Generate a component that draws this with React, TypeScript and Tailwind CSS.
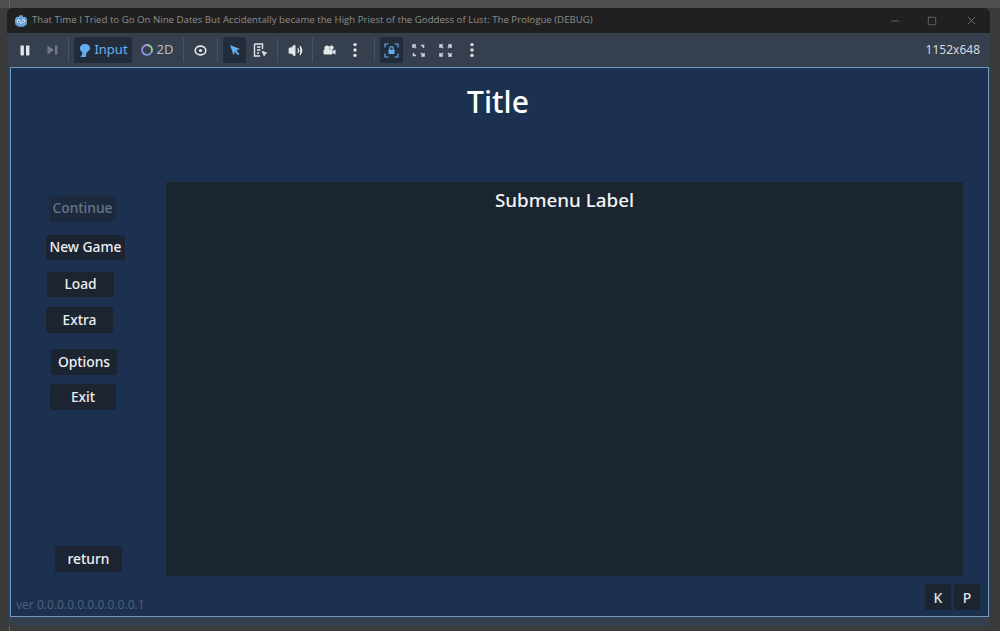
import { Volume2, Minus, Square, X } from "lucide-react";
import type { ReactNode } from "react";

function Sep() {
  return <div className="mx-[5px] h-[24px] w-px shrink-0 bg-[#4a5361]" />;
}

function ToolBtn({ children, active, w = 24 }: { children: ReactNode; active?: boolean; w?: number }) {
  return (
    <div
      className={`flex h-[26px] shrink-0 items-center justify-center rounded-[2px] ${active ? "bg-[#232c3a]" : ""}`}
      style={{ width: w }}
    >
      {children}
    </div>
  );
}

function GodotLogo() {
  return (
    <svg width="14" height="14" viewBox="0 0 16 16" className="shrink-0">
      <path
        d="M1 6 L3 3 L5.5 3.5 L6 1.5 H10 L10.5 3.5 L13 3 L15 6 L14.5 12 L11 14.5 H5 L1.5 12 Z"
        fill="#6ba4d8"
      />
      <circle cx="5.3" cy="8" r="1.8" fill="#fff" />
      <circle cx="10.7" cy="8" r="1.8" fill="#fff" />
      <circle cx="5.5" cy="8.2" r="0.9" fill="#33445a" />
      <circle cx="10.5" cy="8.2" r="0.9" fill="#33445a" />
      <rect x="7.4" y="9" width="1.2" height="2" fill="#fff" />
    </svg>
  );
}

function Dots() {
  return (
    <svg width="6" height="16" viewBox="0 0 6 16" fill="#dfe2e6">
      <circle cx="3" cy="2.6" r="1.7" />
      <circle cx="3" cy="8" r="1.7" />
      <circle cx="3" cy="13.4" r="1.7" />
    </svg>
  );
}

// corners and small arrows of the two "embed" buttons
function ExpandIcon() {
  return (
    <svg width="13" height="13" viewBox="0 0 13 13" fill="none" stroke="#cfd3d9" strokeWidth="1.5">
      <path d="M1 4V1h3M2 2l2 2" />
      <path d="M9 1.5h2.5V4" />
      <path d="M1.5 9v2.5H4" />
      <path d="M12 9v3H9M11 11L9 9" />
    </svg>
  );
}

function ShrinkIcon() {
  return (
    <svg width="13" height="13" viewBox="0 0 13 13" fill="none" stroke="#cfd3d9" strokeWidth="1.5">
      <path d="M1 4V1h3M1.5 1.5L4 4" />
      <path d="M9 1h3v3M11.5 1.5L9 4" />
      <path d="M1 9v3h3M1.5 11.5L4 9" />
      <path d="M12 9v3H9M11.5 11.5L9 9" />
    </svg>
  );
}

function MenuBtn({ label, className, dim }: { label: string; className: string; dim?: boolean }) {
  return (
    <div
      className={`flex items-center justify-center rounded-[2px] text-[13.8px] font-medium ${
        dim ? "bg-[#1c2a40] text-[#6a7484]" : "bg-[#1c2431] text-[#eef0f3]"
      } ${className}`}
    >
      {label}
    </div>
  );
}

export default function App() {
  return (
    <div className="relative h-[631px] w-[1000px] overflow-hidden bg-[#3b3b3b] pl-[7px] pt-[8px] font-['Noto_Sans',sans-serif]">
      <div className="absolute left-0 top-0 h-[8px] w-full bg-[#4e4e4e]" />
      <div className="absolute left-[9px] top-0 h-[8px] w-px bg-[#6b6b45]" />
      <div className="absolute bottom-0 left-[9px] h-[6px] w-px bg-[#6b6b45]" />
      <div className="relative flex h-[618px] w-[983px] flex-col overflow-hidden rounded-t-[6px] bg-[#363f4d]">
        {/* titlebar */}
        <div className="flex h-[25px] shrink-0 items-center bg-[#202020] pl-[7px]">
          <GodotLogo />
          <span className="ml-[4px] whitespace-nowrap font-['Open_Sans',sans-serif] text-[9.66px] text-[#8c8c8c]">
            That Time I Tried to Go On Nine Dates But Accidentally became the High Priest of the Goddess of Lust: The Prologue (DEBUG)
          </span>
          <div className="ml-auto flex items-center text-[#8f8f8f]">
            <Minus size={12} strokeWidth={1.2} className="mr-[26px]" />
            <Square size={10} strokeWidth={1.4} className="mr-[28px]" />
            <X size={13} strokeWidth={1.2} className="mr-[12px]" />
          </div>
        </div>

        {/* toolbar */}
        <div className="flex h-[34px] shrink-0 items-center pl-[5px] pr-[10px]">
          <ToolBtn w={26}>
            <svg width="10" height="11" viewBox="0 0 10 11" fill="#e4e7ea">
              <rect x="0.5" y="0.5" width="3.4" height="10" rx="0.8" />
              <rect x="6" y="0.5" width="3.4" height="10" rx="0.8" />
            </svg>
          </ToolBtn>
          <ToolBtn w={25}>
            <svg width="11" height="10" viewBox="0 0 11 10" fill="#737b88" className="ml-[3px]">
              <path d="M0.5 0.5L7 5 0.5 9.5z" />
              <rect x="8" y="0.5" width="2.4" height="9" />
            </svg>
          </ToolBtn>
          <Sep />
          <ToolBtn active w={58}>
            <svg width="13" height="15" viewBox="0 0 13 15" className="mr-[3px]">
              <path d="M7 1C10 1 12.2 3 12 5.6 11.8 8 9.4 8.6 8.4 10L7.8 14H2.4L4.4 11C5 9.5 2.4 8.2 2 6 1.6 3 4 1 7 1Z" fill="#63acef" />
            </svg>
            <span className="text-[13px] text-[#69b1f0]">Input</span>
          </ToolBtn>
          <ToolBtn w={46}>
            <svg width="12" height="12" viewBox="0 0 12 12" className="ml-[4px] mr-[4px]" fill="none" strokeWidth="1.8">
              <path d="M6 1a5 5 0 0 1 4.3 7.5" stroke="#8fd18a" />
              <path d="M10.3 8.5A5 5 0 0 1 1.2 7.2" stroke="#7f9ce8" />
              <path d="M1.2 7.2A5 5 0 0 1 6 1" stroke="#a78ae0" />
            </svg>
            <span className="text-[13px] text-[#b9bec6]">2D</span>
          </ToolBtn>
          <Sep />
          <ToolBtn w={23}>
            <svg width="13" height="11" viewBox="0 0 13 11" fill="none" stroke="#e4e7ea" strokeWidth="1.6">
              <ellipse cx="6.5" cy="5.5" rx="5.3" ry="4.4" />
              <circle cx="6.5" cy="5.5" r="1.6" fill="#e4e7ea" stroke="none" />
            </svg>
          </ToolBtn>
          <Sep />
          <ToolBtn active w={23}>
            <svg width="12" height="12" viewBox="0 0 12 12" fill="#63acef">
              <path d="M1 1L11 5 7.2 6.6 10.4 10 9 11.2 5.8 7.8 4.6 11.2z" />
            </svg>
          </ToolBtn>
          <ToolBtn w={26}>
            <svg width="15" height="14" viewBox="0 0 15 14" fill="none" stroke="#e4e7ea" strokeWidth="1.4" className="ml-[3px]">
              <path d="M1.5 1h8v5M1.5 1v12h5.5M4 4h3.5M4 7h3.5M4 10h2" />
              <path d="M9 8l5 2-2 .8-.8 2.4z" fill="#e4e7ea" strokeWidth="0.6" />
            </svg>
          </ToolBtn>
          <Sep />
          <ToolBtn w={24}>
            <Volume2 size={15} fill="#e4e7ea" stroke="#e4e7ea" />
          </ToolBtn>
          <Sep />
          <ToolBtn w={22}>
            <svg width="14" height="13" viewBox="0 0 14 13" fill="#e4e7ea">
              <circle cx="5" cy="4" r="2.6" />
              <circle cx="9.5" cy="3.6" r="2.2" />
              <rect x="1.5" y="5.5" width="9" height="5" rx="1" />
              <path d="M10.5 7l3-1.5v5l-3-1.5z" />
            </svg>
          </ToolBtn>
          <ToolBtn w={29}>
            <Dots />
          </ToolBtn>
          <Sep />
          <ToolBtn active w={23}>
            <svg width="15" height="15" viewBox="0 0 15 15" fill="none" stroke="#63acef" strokeWidth="1.2">
              <path d="M1 4.5V1h3.5M10.5 1H14v3.5M14 10.5V14h-3.5M4.5 14H1v-3.5" />
              <rect x="4.5" y="6.8" width="6" height="4.2" rx="0.5" fill="#63acef" stroke="none" />
              <path d="M5.8 7V5.4a1.7 1.7 0 0 1 3.4 0V7" />
            </svg>
          </ToolBtn>
          <ToolBtn w={30}>
            <ExpandIcon />
          </ToolBtn>
          <ToolBtn w={24}>
            <ShrinkIcon />
          </ToolBtn>
          <ToolBtn w={30}>
            <Dots />
          </ToolBtn>
          <span className="ml-auto text-[12px] text-[#d6d9dd]">1152x648</span>
        </div>

        {/* game viewport */}
        <div className="ml-[3px] flex h-[550px] w-[979px] shrink-0 flex-col border border-[#6f9bc6] bg-[#1c3150]">
          <div className="flex h-[114px] shrink-0 items-start justify-center pt-[14px] pr-[3px]">
            <span className="text-[30px] font-medium leading-[40px] text-white">Title</span>
          </div>
          <div className="flex h-[394px] shrink-0">
            <div className="flex w-[155px] shrink-0 flex-col">
              <MenuBtn dim label="Continue" className="ml-[38px] mt-[13px] h-[27px] w-[67px]" />
              <MenuBtn label="New Game" className="ml-[35px] mt-[13px] h-[25px] w-[79px]" />
              <MenuBtn label="Load" className="ml-[36px] mt-[12px] h-[25px] w-[67px]" />
              <MenuBtn label="Extra" className="ml-[35px] mt-[10px] h-[26px] w-[67px]" />
              <MenuBtn label="Options" className="ml-[40px] mt-[16px] h-[26px] w-[66px]" />
              <MenuBtn label="Exit" className="ml-[39px] mt-[9px] h-[26px] w-[66px]" />
              <MenuBtn label="return" className="ml-[44px] mt-auto mb-[4px] h-[26px] w-[67px]" />
            </div>
            <div className="flex h-full w-[797px] shrink-0 justify-center rounded-[2px] bg-[#1b252f] pt-[5px]">
              <span className="text-[18.8px] font-medium leading-[26px] text-[#f2f3f5]">Submenu Label</span>
            </div>
          </div>
          <div className="flex flex-1 items-end pb-[3px] pl-[5px] pr-[8px]">
            <span className="text-[12px] leading-[16px] text-[#4c5f78]">ver 0.0.0.0.0.0.0.0.0.0.1</span>
            <div className="mb-[3px] ml-auto flex gap-[3px]">
              <div className="flex h-[26px] w-[26px] items-center justify-center rounded-[2px] bg-[#1c2431] text-[14px] font-medium text-[#dfe3e8]">K</div>
              <div className="flex h-[26px] w-[26px] items-center justify-center rounded-[2px] bg-[#1c2431] text-[14px] font-medium text-[#dfe3e8]">P</div>
            </div>
          </div>
        </div>
      </div>
    </div>
  );
}
